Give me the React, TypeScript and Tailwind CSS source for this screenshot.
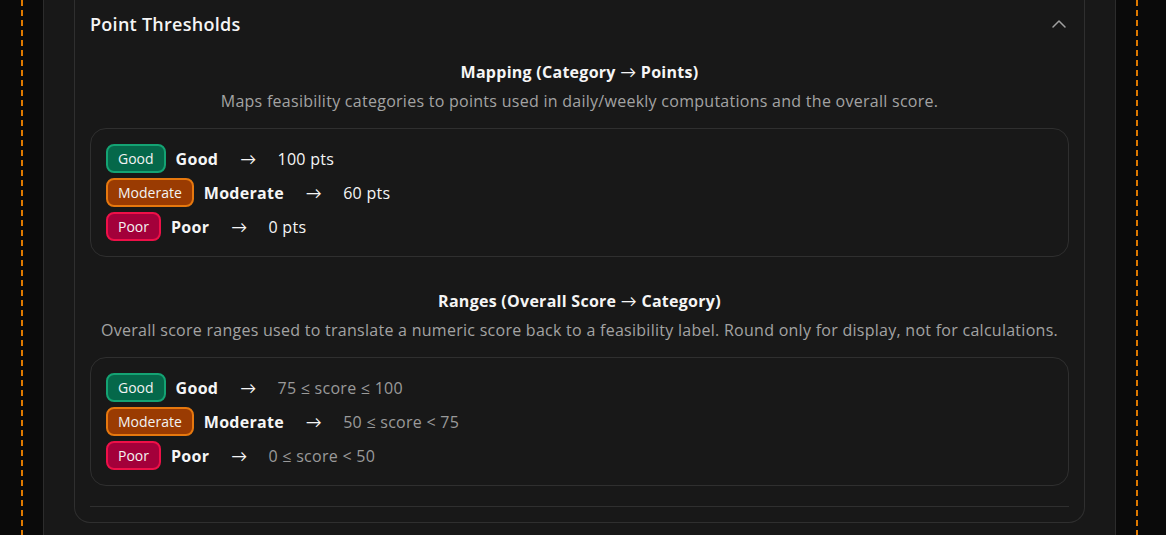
import { ChevronUp } from "lucide-react";

type Level = "good" | "moderate" | "poor";

const badgeClass: Record<Level, string> = {
  good: "bg-[#05684a] border-[#14a373]",
  moderate: "bg-[#9a3b02] border-[#e6780e]",
  poor: "bg-[#a3003a] border-[#ee1048]",
};

const labels: Record<Level, string> = {
  good: "Good",
  moderate: "Moderate",
  poor: "Poor",
};

const mapping: { level: Level; value: string }[] = [
  { level: "good", value: "100 pts" },
  { level: "moderate", value: "60 pts" },
  { level: "poor", value: "0 pts" },
];

const ranges: { level: Level; value: string }[] = [
  { level: "good", value: "75 ≤ score ≤ 100" },
  { level: "moderate", value: "50 ≤ score < 75" },
  { level: "poor", value: "0 ≤ score < 50" },
];

const DashedLine = () => (
  <div className="w-[2px] h-full bg-[repeating-linear-gradient(to_bottom,#e07a00_0px,#e07a00_6px,transparent_6px,transparent_10px)]" />
);

const Arrow = () => <span className="font-['Lato',sans-serif] font-normal">→</span>;

const Badge = ({ level }: { level: Level }) => (
  <span
    className={`h-[29px] flex items-center px-[10px] rounded-lg border-2 text-sm tracking-normal text-[#f3f3f3] ${badgeClass[level]}`}
  >
    {labels[level]}
  </span>
);

const Row = ({ level, value, muted }: { level: Level; value: string; muted?: boolean }) => (
  <div className="flex items-center">
    <Badge level={level} />
    <span className="ml-[10px] font-bold text-[#f5f5f5]">{labels[level]}</span>
    <span className="ml-[22px] mr-[21px] text-[#f5f5f5]">
      <Arrow />
    </span>
    <span className={muted ? "text-[#9a9a9a]" : "text-[#f5f5f5]"}>{value}</span>
  </div>
);

const Section = ({
  title,
  desc,
  rows,
  muted,
}: {
  title: React.ReactNode;
  desc: string;
  rows: { level: Level; value: string }[];
  muted?: boolean;
}) => (
  <div>
    <h3 className="text-center font-bold text-[#f5f5f5] leading-6">{title}</h3>
    <p className="text-center text-[#a3a3a3] leading-6 mt-[5px]">{desc}</p>
    <div className="mt-[15px] border border-[#2f2f2f] rounded-2xl px-[15px] py-[15px] flex flex-col gap-[5px]">
      {rows.map((r) => (
        <Row key={r.level} level={r.level} value={r.value} muted={muted} />
      ))}
    </div>
  </div>
);

export default function App() {
  return (
    <div className="w-[1166px] h-[535px] overflow-hidden bg-[#0a0a0a] flex font-['Segoe_UI','Open_Sans',sans-serif] text-base tracking-[0.27px]">
      <div className="w-[43px] h-full pl-[21px] shrink-0">
        <DashedLine />
      </div>
      <div className="w-[1073px] h-full shrink-0 bg-[#181818] border-x border-[#2c2c2c] px-[30px]">
        <div className="border border-t-0 border-[#2f2f2f] rounded-b-2xl px-[15px] pt-[10px] pb-[15px]">
          <div className="flex items-center justify-between h-7">
            <h2 className="text-lg font-semibold text-[#f5f5f5] leading-7">Point Thresholds</h2>
            <ChevronUp size={24} strokeWidth={1.5} className="text-[#a0a0a0] -mr-[2px]" />
          </div>
          <div className="mt-[22px]">
            <Section
              title={
                <>
                  Mapping (Category <Arrow /> Points)
                </>
              }
              desc="Maps feasibility categories to points used in daily/weekly computations and the overall score."
              rows={mapping}
            />
          </div>
          <div className="mt-8">
            <Section
              title={
                <>
                  Ranges (Overall Score <Arrow /> Category)
                </>
              }
              desc="Overall score ranges used to translate a numeric score back to a feasibility label. Round only for display, not for calculations."
              rows={ranges}
              muted
            />
          </div>
          <div className="mt-5 border-t border-[#2f2f2f]" />
        </div>
      </div>
      <div className="w-[50px] h-full pl-[20px] shrink-0">
        <DashedLine />
      </div>
    </div>
  );
}
